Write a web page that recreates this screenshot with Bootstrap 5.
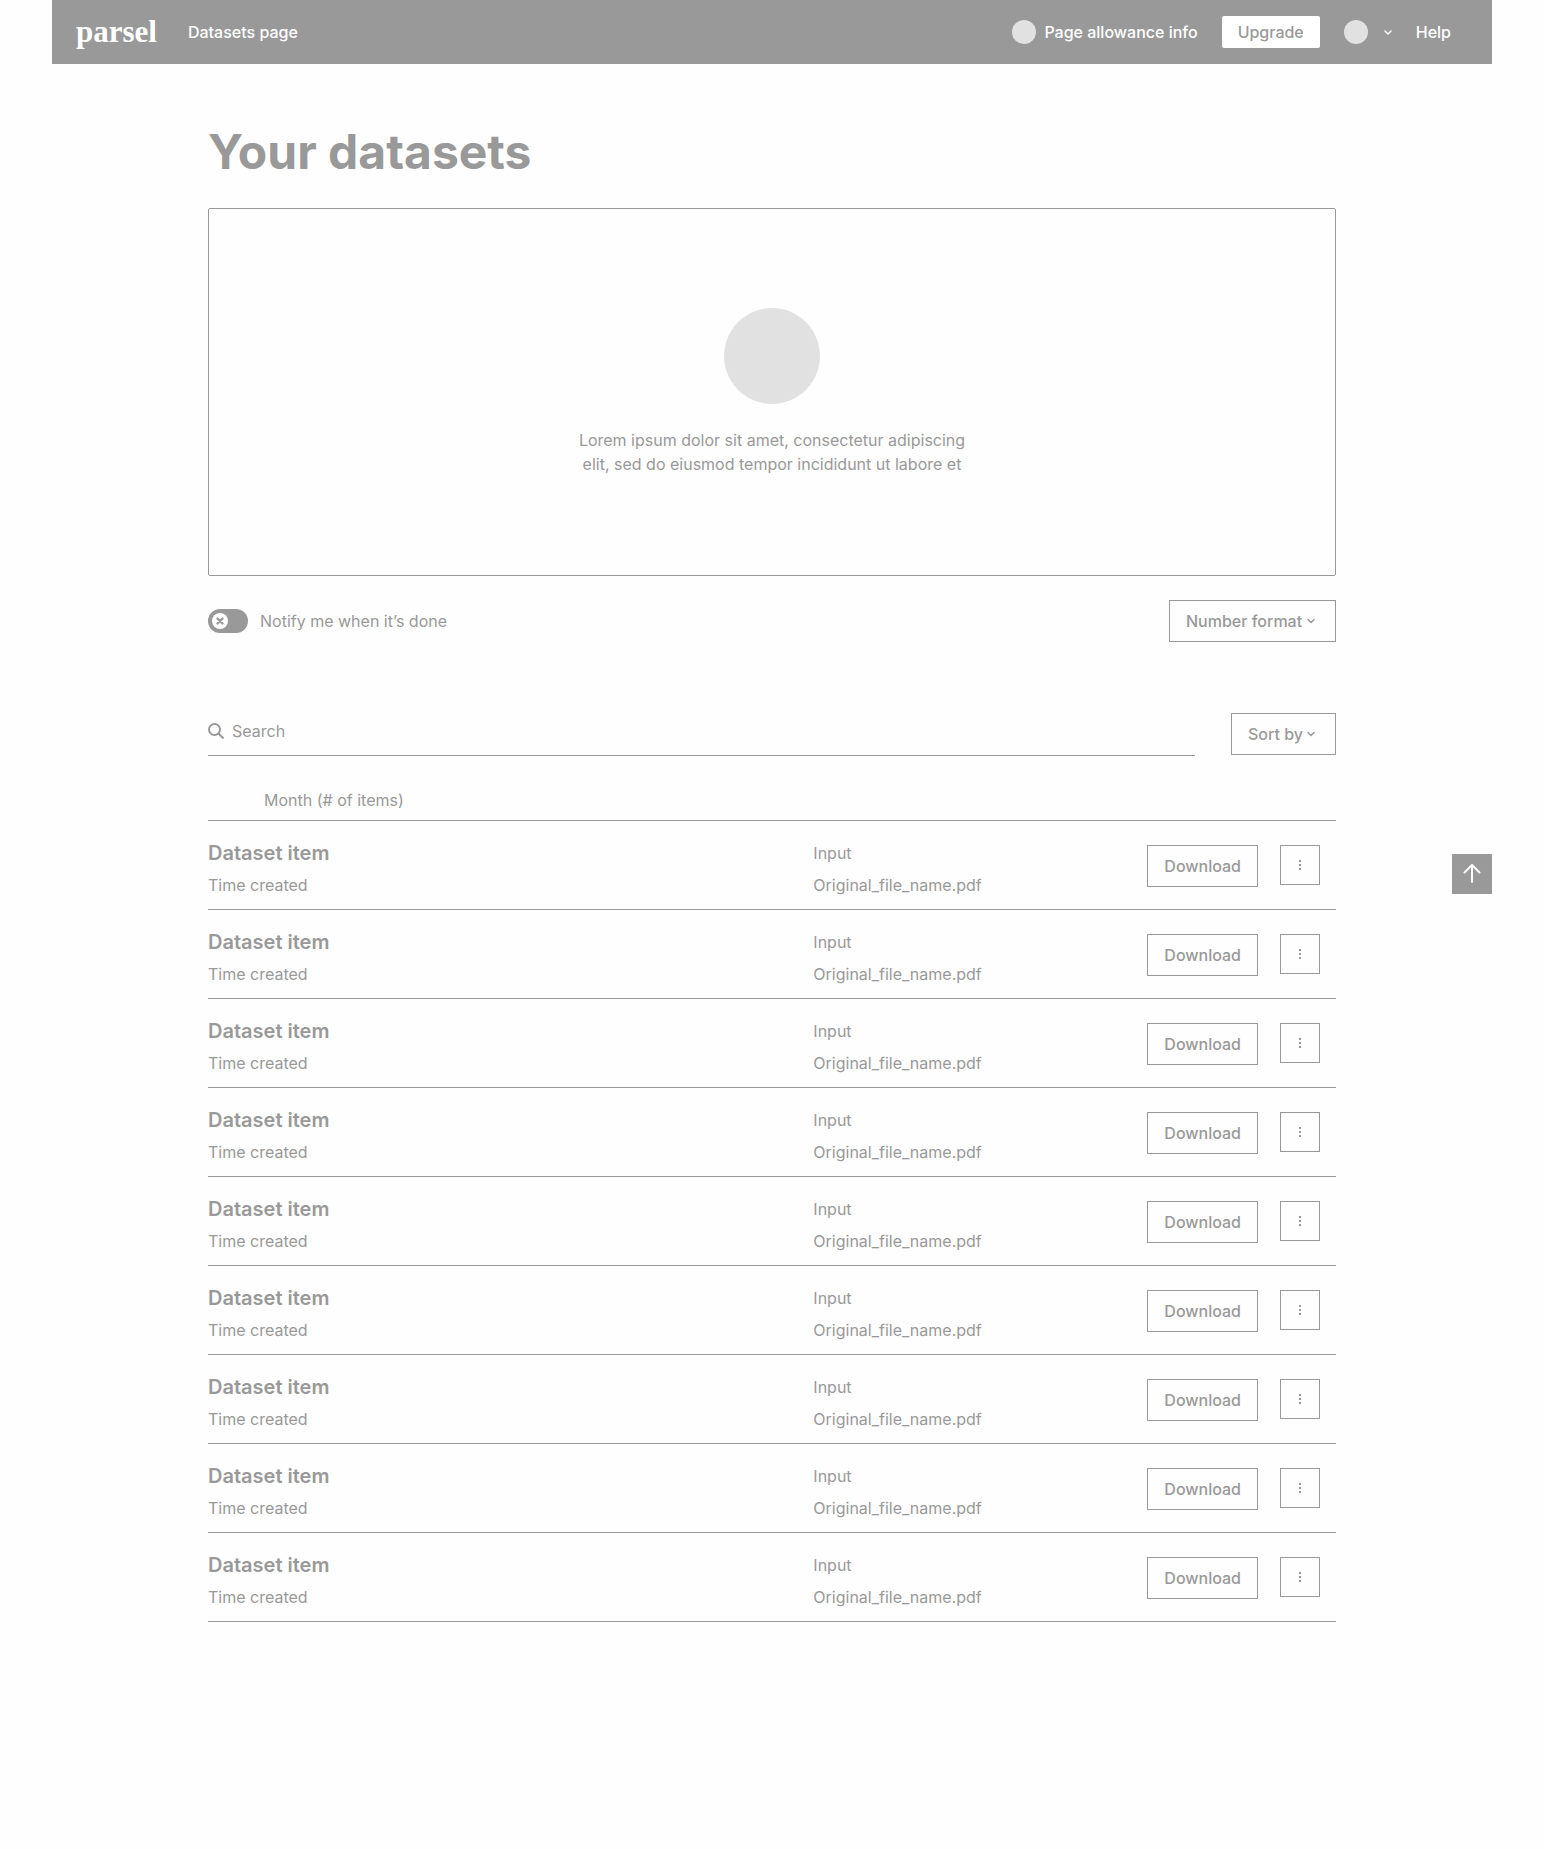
<!DOCTYPE html>
<html lang="en">
<head>
<meta charset="utf-8">
<meta name="viewport" content="width=device-width, initial-scale=1">
<title>Parsel – Your datasets</title>
<link href="https://cdn.jsdelivr.net/npm/bootstrap@5.3.0/dist/css/bootstrap.min.css" rel="stylesheet">
<style>
  :root { --ink: #999; --soft: #e1e1e1; --paper: #fefefe; }
  body { font-family: Inter, "Liberation Sans", sans-serif; font-size: 16px; line-height: 24px; color: var(--ink); background: var(--paper); }
  .frame { max-width: 1440px; }
  .page-body { max-width: 1128px; padding-top: 56px; }
  .topbar { background: var(--ink); min-height: 64px; padding: 0 41px 0 24px; font-weight: 500; }
  .topbar a { color: #fff; text-decoration: none; }
  .topbar .wordmark { font-family: "Liberation Serif", serif; font-weight: 700; font-size: 31px; line-height: 32px; margin-right: 31px; }
  .dot { width: 24px; height: 24px; background: var(--soft); border-radius: 50%; }
  .dot-lg { width: 96px; height: 96px; }
  .btn-upgrade { --bs-btn-font-weight: 500; --bs-btn-padding-x: 15px; --bs-btn-padding-y: 3px; --bs-btn-border-radius: 2px; --bs-btn-bg: #fff; --bs-btn-color: var(--ink); --bs-btn-hover-bg: var(--soft); --bs-btn-line-height: 24px; }
  .account { background: none; border: 0; padding: 0; color: #fff; gap: 12px; }
  h1 { font-size: 48px; line-height: 64px; font-weight: 700; margin-bottom: 24px; }
  .dropzone { border: 1px solid var(--ink); border-radius: 2px; padding: 99px 16px; gap: 24px; }
  .dropzone p { max-width: 400px; }
  .btn-line { --bs-btn-font-weight: 500; --bs-btn-padding-x: 16px; --bs-btn-padding-y: 8px; --bs-btn-line-height: 24px; --bs-btn-border-radius: 0; --bs-btn-border-color: var(--ink); --bs-btn-color: var(--ink); --bs-btn-hover-color: #fff; --bs-btn-hover-bg: var(--ink); }
  .btn-square { width: 40px; height: 40px; padding: 0; }
  .pick { width: auto; height: 42px; border: 1px solid var(--ink); border-radius: 0; font-weight: 500; line-height: 24px; color: var(--ink); padding: 8px 32px 8px 16px; background-color: transparent; background-position: right 16px center; background-size: 16px 16px;
    background-image: url("data:image/svg+xml,%3Csvg xmlns='http://www.w3.org/2000/svg' viewBox='0 0 16 16'%3E%3Cpath d='M5 6.5l3 3 3-3' fill='none' stroke='%23999' stroke-width='1.5' stroke-linecap='round' stroke-linejoin='round'/%3E%3C/svg%3E"); }
  .notify { gap: 12px; padding: 0; min-height: 0; }
  .notify .form-check-input { width: 40px; height: 24px; margin: 0; border: 0; background-color: var(--ink); background-size: 24px 24px; background-position: left center;
    background-image: url("data:image/svg+xml,%3Csvg xmlns='http://www.w3.org/2000/svg' viewBox='0 0 24 24'%3E%3Ccircle cx='12' cy='12' r='8' fill='%23fefefe'/%3E%3Cpath d='M9.500 9.500l5 5M14.500 9.500l-5 5' stroke='%23999' stroke-width='2.400' stroke-linecap='round'/%3E%3C/svg%3E"); }
  .notify .form-check-input:checked { background-position: right center; }
  .toolbar { margin-top: 71px; gap: 36px; }
  .search { border-bottom: 1px solid var(--ink); gap: 8px; padding: 6px 0 12px; }
  .search input { height: 24px; border: 0; background: none; padding: 0; border-radius: 0; line-height: 24px; color: var(--ink); }
  .search input::placeholder { color: var(--ink); opacity: 1; }
  .month { border-bottom: 1px solid var(--ink); padding: 32px 56px 8px; }
  .datasets { --bs-list-group-bg: transparent; --bs-list-group-color: var(--ink); --bs-list-group-border-color: var(--ink); --bs-list-group-border-radius: 0; }
  .datasets .list-group-item { padding: 20px 16px 12px 0; border-width: 0 0 1px; }
  .datasets h2 { font-size: 20px; line-height: 24px; font-weight: 600; margin: 0; }
  .source { width: 334px; }
  .actions { gap: 22px; padding-top: 4px; }
  .actions svg { display: block; margin: 0 auto; }
  .to-top { position: fixed; top: 854px; right: max(0px, calc(50vw - 720px)); background: var(--ink); color: #fff; border: 0; border-radius: 0; }
</style>
</head>
<body>
<svg class="d-none" aria-hidden="true">
  <symbol id="kebab" viewBox="0 0 16 16"><path d="M7 3h2v2H7zM7 7h2v2H7zM7 11h2v2H7z" fill="currentColor"/></symbol>
</svg>

<div class="frame mx-auto">
  <nav class="topbar d-flex align-items-center" aria-label="Main">
    <a class="wordmark" href="#">parsel</a>
    <a href="#">Datasets page</a>
    <div class="d-flex align-items-center ms-auto gap-4">
      <a class="d-flex align-items-center gap-2" href="#"><span class="dot"></span>Page allowance info</a>
      <button type="button" class="btn btn-upgrade">Upgrade</button>
      <div class="d-flex align-items-center gap-3">
        <button type="button" class="account d-flex align-items-center" aria-label="Account">
          <span class="dot"></span>
          <svg width="16" height="16" viewBox="0 0 16 16" fill="none" stroke="currentColor" stroke-width="1.5" stroke-linecap="round" stroke-linejoin="round"><path d="M5 7l3 3 3-3"/></svg>
        </button>
        <a class="ms-1" href="#">Help</a>
      </div>
    </div>
  </nav>

  <main class="page-body mx-auto">
    <h1>Your datasets</h1>

    <section class="dropzone d-flex flex-column align-items-center text-center">
      <span class="dot dot-lg"></span>
      <p class="mb-0">Lorem ipsum dolor sit amet, consectetur adipiscing elit, sed do eiusmod tempor incididunt ut labore et</p>
    </section>

    <div class="d-flex justify-content-between align-items-center mt-4">
      <div class="notify form-check form-switch d-flex align-items-center mb-0">
        <input class="form-check-input" type="checkbox" role="switch" id="notify">
        <label for="notify">Notify me when it’s done</label>
      </div>
      <select class="pick form-select" aria-label="Number format"><option>Number format</option></select>
    </div>

    <div class="toolbar d-flex">
      <div class="search d-flex align-items-center flex-grow-1">
        <svg width="16" height="16" viewBox="0 0 16 16" fill="none" stroke="currentColor" stroke-width="2"><circle cx="6.5" cy="6.5" r="5.5"/><path d="M10.5 10.5l5 5"/></svg>
        <input class="flex-grow-1" type="text" placeholder="Search" aria-label="Search">
      </div>
      <select class="pick form-select" aria-label="Sort by"><option>Sort by</option></select>
    </div>

    <div class="month">Month (# of items)</div>
    <ul class="datasets list-group">
      <li class="list-group-item d-flex align-items-start">
        <div class="vstack gap-2"><h2>Dataset item</h2><span>Time created</span></div>
        <div class="source vstack gap-2 flex-grow-0 flex-shrink-0"><span>Input</span><span>Original_file_name.pdf</span></div>
        <div class="actions d-flex align-items-start"><button type="button" class="btn btn-line">Download</button><button type="button" class="btn btn-line btn-square" aria-label="More"><svg width="16" height="16"><use href="#kebab"/></svg></button></div>
      </li>
      <li class="list-group-item d-flex align-items-start">
        <div class="vstack gap-2"><h2>Dataset item</h2><span>Time created</span></div>
        <div class="source vstack gap-2 flex-grow-0 flex-shrink-0"><span>Input</span><span>Original_file_name.pdf</span></div>
        <div class="actions d-flex align-items-start"><button type="button" class="btn btn-line">Download</button><button type="button" class="btn btn-line btn-square" aria-label="More"><svg width="16" height="16"><use href="#kebab"/></svg></button></div>
      </li>
      <li class="list-group-item d-flex align-items-start">
        <div class="vstack gap-2"><h2>Dataset item</h2><span>Time created</span></div>
        <div class="source vstack gap-2 flex-grow-0 flex-shrink-0"><span>Input</span><span>Original_file_name.pdf</span></div>
        <div class="actions d-flex align-items-start"><button type="button" class="btn btn-line">Download</button><button type="button" class="btn btn-line btn-square" aria-label="More"><svg width="16" height="16"><use href="#kebab"/></svg></button></div>
      </li>
      <li class="list-group-item d-flex align-items-start">
        <div class="vstack gap-2"><h2>Dataset item</h2><span>Time created</span></div>
        <div class="source vstack gap-2 flex-grow-0 flex-shrink-0"><span>Input</span><span>Original_file_name.pdf</span></div>
        <div class="actions d-flex align-items-start"><button type="button" class="btn btn-line">Download</button><button type="button" class="btn btn-line btn-square" aria-label="More"><svg width="16" height="16"><use href="#kebab"/></svg></button></div>
      </li>
      <li class="list-group-item d-flex align-items-start">
        <div class="vstack gap-2"><h2>Dataset item</h2><span>Time created</span></div>
        <div class="source vstack gap-2 flex-grow-0 flex-shrink-0"><span>Input</span><span>Original_file_name.pdf</span></div>
        <div class="actions d-flex align-items-start"><button type="button" class="btn btn-line">Download</button><button type="button" class="btn btn-line btn-square" aria-label="More"><svg width="16" height="16"><use href="#kebab"/></svg></button></div>
      </li>
      <li class="list-group-item d-flex align-items-start">
        <div class="vstack gap-2"><h2>Dataset item</h2><span>Time created</span></div>
        <div class="source vstack gap-2 flex-grow-0 flex-shrink-0"><span>Input</span><span>Original_file_name.pdf</span></div>
        <div class="actions d-flex align-items-start"><button type="button" class="btn btn-line">Download</button><button type="button" class="btn btn-line btn-square" aria-label="More"><svg width="16" height="16"><use href="#kebab"/></svg></button></div>
      </li>
      <li class="list-group-item d-flex align-items-start">
        <div class="vstack gap-2"><h2>Dataset item</h2><span>Time created</span></div>
        <div class="source vstack gap-2 flex-grow-0 flex-shrink-0"><span>Input</span><span>Original_file_name.pdf</span></div>
        <div class="actions d-flex align-items-start"><button type="button" class="btn btn-line">Download</button><button type="button" class="btn btn-line btn-square" aria-label="More"><svg width="16" height="16"><use href="#kebab"/></svg></button></div>
      </li>
      <li class="list-group-item d-flex align-items-start">
        <div class="vstack gap-2"><h2>Dataset item</h2><span>Time created</span></div>
        <div class="source vstack gap-2 flex-grow-0 flex-shrink-0"><span>Input</span><span>Original_file_name.pdf</span></div>
        <div class="actions d-flex align-items-start"><button type="button" class="btn btn-line">Download</button><button type="button" class="btn btn-line btn-square" aria-label="More"><svg width="16" height="16"><use href="#kebab"/></svg></button></div>
      </li>
      <li class="list-group-item d-flex align-items-start">
        <div class="vstack gap-2"><h2>Dataset item</h2><span>Time created</span></div>
        <div class="source vstack gap-2 flex-grow-0 flex-shrink-0"><span>Input</span><span>Original_file_name.pdf</span></div>
        <div class="actions d-flex align-items-start"><button type="button" class="btn btn-line">Download</button><button type="button" class="btn btn-line btn-square" aria-label="More"><svg width="16" height="16"><use href="#kebab"/></svg></button></div>
      </li>
    </ul>
  </main>
</div>

<button type="button" class="to-top btn-square d-flex align-items-center justify-content-center" aria-label="Back to top">
  <svg width="20" height="20" viewBox="0 0 20 20" fill="none" stroke="currentColor" stroke-width="2" stroke-linecap="round" stroke-linejoin="round"><path d="M10 18V1M2.500 8.500L10 1l7.500 7.500"/></svg>
</button>

<script src="https://cdn.jsdelivr.net/npm/bootstrap@5.3.0/dist/js/bootstrap.bundle.min.js"></script>
</body>
</html>
